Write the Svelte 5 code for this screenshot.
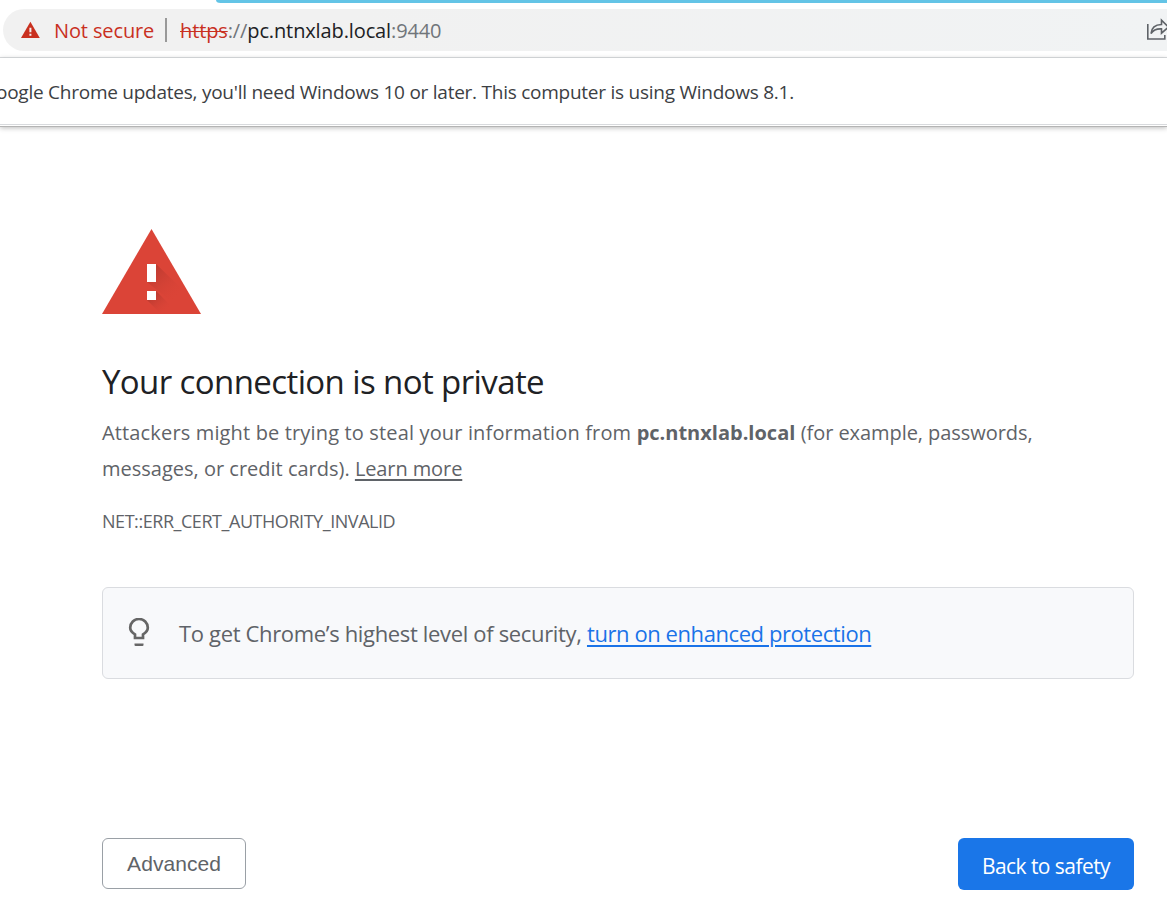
<script>
  const host = 'pc.ntnxlab.local';
</script>

<div class="browser">
  <div class="tabs"><div class="strip"></div></div>
  <div class="toolbar">
    <div class="omnibox">
      <svg class="warn" width="20" height="18" viewBox="0 0 20 18">
        <path d="M10.400 .8 19.800 17H1Z" fill="#c9301f" />
        <path d="M9.400 6.7h2v4.600h-2zm0 6h2v2h-2z" fill="#f1f1f1" />
      </svg>
      <span class="insecure">Not secure</span>
      <span class="divider"></span>
      <span class="url"><span class="scheme">https</span>://<span class="host">{host}</span>:9440</span>
      <svg class="share" width="27" height="24" viewBox="0 0 27 24" fill="none" stroke="#5f6368" stroke-width="1.6">
        <path d="M1.8 6v15h17v-4" />
        <path d="M5 15.5C5.5 10 9 6.7 15.5 6.5V2.2L22.5 9l-7 6.2v-4.3C10.5 10.6 7.2 12 5 15.5Z" />
      </svg>
    </div>
  </div>
  <div class="infobar"><span>oogle Chrome updates, you'll need Windows 10 or later. This computer is using Windows 8.1.</span></div>

  <main>
    <svg class="danger" width="100" height="86" viewBox="0 0 100 86">
      <defs>
        <linearGradient id="shade" x1="48" y1="38" x2="76" y2="68" gradientUnits="userSpaceOnUse">
          <stop stop-color="#a9352c" stop-opacity=".7" />
          <stop offset="1" stop-color="#db4437" stop-opacity="0" />
        </linearGradient>
        <linearGradient id="shade-dot" x1="47" y1="68" x2="60" y2="84" gradientUnits="userSpaceOnUse">
          <stop stop-color="#a9352c" stop-opacity=".7" />
          <stop offset="1" stop-color="#db4437" stop-opacity=".1" />
        </linearGradient>
      </defs>
      <path d="M49.5 0 99 85H0Z" fill="#db4437" />
      <path d="M54 35 82 62 99 85H85L45 53Z" fill="url(#shade)" />
      <path d="M54 62 77 85H59L45 71Z" fill="url(#shade-dot)" />
      <path d="M45 35h9v18h-9zm0 27h9v9h-9z" fill="#fff" />
    </svg>
    <h1>Your connection is not private</h1>
    <p class="body">
      <span class="l1">Attackers might be trying to steal your information from <strong>{host}</strong> <span class="tail">(for example, passwords,</span></span><br />
      <span class="l2">messages, or credit cards). <a href="#more">Learn more</a></span>
    </p>
    <div class="code">NET::ERR_CERT_AUTHORITY_INVALID</div>
    <div class="tip">
      <svg width="22" height="30" viewBox="0 0 22 30">
        <path d="M7 20v-3.6C4.100 14.700 2.200 12.500 2.200 9.800a8.800 8.800 0 0 1 17.600 0c0 2.700-1.900 4.900-4.800 6.600V20Z" fill="none" stroke="#666" stroke-width="2.700" />
        <path d="M6.500 25.500h9v1.500q0 1-1 1h-7q-1 0-1-1z" fill="#666" />
      </svg>
      <span class="tiptext">To get Chrome’s highest level of security, <a href="#protect">turn on enhanced protection</a></span>
    </div>
    <div class="actions">
      <button class="advanced">Advanced</button>
      <button class="safety">Back to safety</button>
    </div>
  </main>
</div>

<style>
  :global(body) { margin: 0; overflow: hidden; background: #fff; }
  * { box-sizing: border-box; }
  .browser { width: 1167px; height: 897px; overflow: hidden; font-family: "Open Sans", "Noto Sans", sans-serif; white-space: nowrap; }
  .tabs { height: 9px; padding-left: 216px; }
  .strip { height: 3px; background: #63c4e6; border-bottom-left-radius: 6px 4px; }
  .toolbar { height: 49px; padding-left: 3px; border-bottom: 1px solid #d6d9dc; }
  .omnibox { height: 42px; display: flex; align-items: center; padding-left: 17px; background: linear-gradient(90deg, #f1f1f1 30%, #f1f3f4); border-radius: 21px 0 0 21px; font-size: 20px; color: #70757a; }
  .warn { flex: none; }
  .insecure { width: 101px; margin-left: 14px; color: #c9301f; letter-spacing: -.12px; }
  .divider { width: 2px; height: 24px; margin-left: 10px; background: #999; }
  .url { margin-left: 13px; letter-spacing: -.12px; }
  .scheme { color: #c9301f; text-decoration: line-through; text-decoration-thickness: 1px; }
  .host { color: #202124; }
  .share { flex: none; margin-left: auto; margin-right: -6px; }
  .infobar { height: 69px; display: flex; align-items: center; border-bottom: 1px solid #b4b4b4; box-shadow: inset 0 -1px #fff, inset 0 -2px #d8dadd, 0 1px 5px #bbb; font-size: 19px; color: #3c4043; letter-spacing: -.25px; }
  .infobar span { margin-left: -4px; }
  main { padding: 102px 33px 0 102px; color: #5f6368; }
  .danger { display: block; }
  h1 { margin: 43px 0 0; height: 48px; line-height: 48px; font-size: 33px; font-weight: 400; color: #202124; letter-spacing: -.6px; }
  .body { margin: 9px 0 0; font-size: 20px; line-height: 36px; }
  .l1 { letter-spacing: .15px; }
  .l1 strong { letter-spacing: 0; }
  .l1 .tail { letter-spacing: -.06px; }
  .body a { color: inherit; letter-spacing: -.1px; text-decoration-thickness: 2px; text-underline-offset: 3px; }
  .code { margin-top: 22px; height: 24px; line-height: 24px; font-size: 18px; letter-spacing: -.45px; }
  .tip { display: flex; align-items: center; height: 92px; margin-top: 54px; padding-left: 25px; border: 1px solid #dadce0; border-radius: 6px; background: #f8f9fb; font-size: 22px; }
  .tip svg { flex: none; }
  .tiptext { margin-left: 29px; letter-spacing: -.34px; }
  .tip a { color: #1a73e8; letter-spacing: -.42px; text-decoration-thickness: 2px; text-underline-offset: 3px; }
  .actions { display: flex; justify-content: space-between; margin-top: 159px; }
  button { padding: 0; border-radius: 6px; }
  .advanced { width: 144px; height: 51px; border: 1px solid #9aa0a6; background: #fff; color: #5f6368; font: 21px "Liberation Sans", sans-serif; letter-spacing: .05px; }
  .safety { width: 176px; height: 52px; border: 0; background: #1a76e8; color: #fff; font: 21px "Open Sans", sans-serif; padding-top: 3px; letter-spacing: -.55px; }
</style>
